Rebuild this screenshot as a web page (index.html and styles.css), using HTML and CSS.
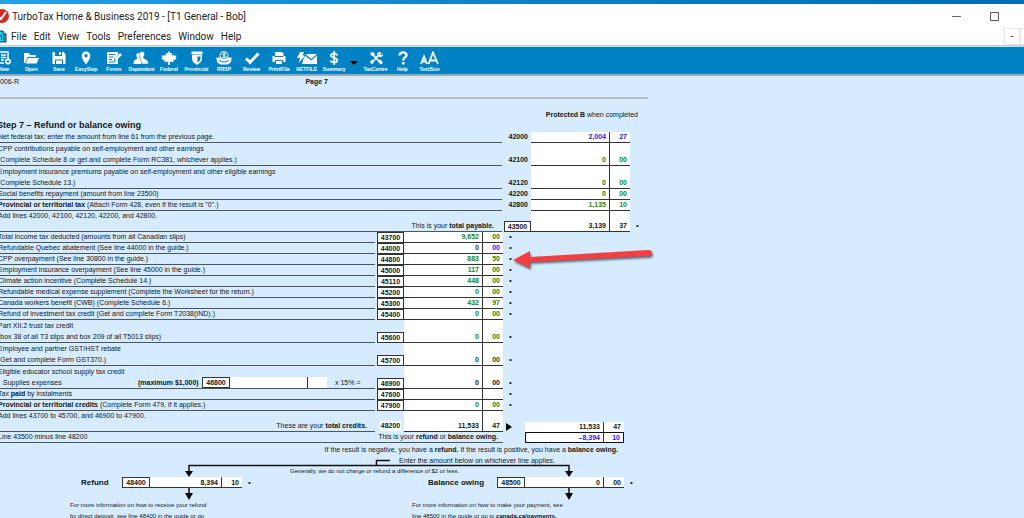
FILE: index.html
```html
<!DOCTYPE html>
<html lang="en">
<head>
<meta charset="utf-8">
<title>TurboTax Home &amp; Business 2019</title>
<link rel="stylesheet" href="styles.css">
</head>
<body>
<div class="app">
  <div class="desktop-strip"></div>
  <header class="titlebar">
    <svg class="logo" viewBox="0 0 14 14" aria-hidden="true"><circle cx="7" cy="7" r="7" fill="#d52b1e"/><path d="M3 7l3 3 5-7" fill="none" stroke="#fff" stroke-width="2"/></svg>
    <h1 class="window-title">TurboTax Home &amp; Business 2019 - [T1 General - Bob]</h1>
    <div class="window-controls">
      <button class="win-btn" aria-label="Minimize"><svg viewBox="0 0 10 10"><path d="M1 5.500h9" stroke="#666" fill="none"/></svg></button>
      <button class="win-btn" aria-label="Maximize"><svg viewBox="0 0 10 10"><path d="M1.500 1.500h8v8h-8z" stroke="#555" fill="none"/></svg></button>
    </div>
  </header>
  <nav class="menubar">
    <svg class="doc-icon" viewBox="0 0 12 13" aria-hidden="true"><path d="M1 1h7l3 3v8H1z" fill="#19d5ee" stroke="#12363c"/><path d="M8 1v3h3" fill="#fff" stroke="#12363c"/><path d="M5 5.500h2M6.500 5v5M9 5v5M8 10h2" stroke="#0b3aa0" fill="none"/></svg>
    <button>File</button><button>Edit</button><button>View</button><button>Tools</button><button>Preferences</button><button>Window</button><button>Help</button>
    <div class="mdi"><button aria-label="Minimize form">-</button><button aria-label="Restore form"></button></div>
  </nav>
  <div class="toolbar">
    <div class="tools">
      <button><svg viewBox="0 0 16 14"><path d="M3 1h9v8M3 1v11h5M5 4h5M5 6.500h5M5 9h3" fill="none" stroke="#fff" stroke-width="1.500"/><circle cx="12" cy="10.500" r="3" fill="#fff"/><path d="M10.500 10.500h3M12 9v3" stroke="#0080c3"/></svg><span>New</span></button>
      <button><svg viewBox="0 0 16 14"><path d="M1 12V2h5l1 2h6v2H4.500L2 12zM2.500 12.500L5 7h11l-2.500 5.500z" fill="#fff"/></svg><span>Open</span></button>
      <button><svg viewBox="0 0 16 14"><path d="M1.500 1h11l2 2v10h-13z" fill="#fff"/><path d="M4 1h7v4H4zM4 8.500h8V13H4z" fill="#0080c3"/><path d="M8 1h2v3H8zM5 9.500h6V13H5z" fill="#fff"/></svg><span>Save</span></button>
      <button><svg viewBox="0 0 16 14"><path d="M8 0.500a4.300 4.300 0 0 0-4.300 4.300C3.700 8 8 13.500 8 13.500s4.300-5.500 4.300-8.700A4.300 4.300 0 0 0 8 .5z" fill="#fff"/><circle cx="8" cy="4.800" r="1.700" fill="#0080c3"/></svg><span>EasyStep</span></button>
      <button><svg viewBox="0 0 16 14"><path d="M1 1h11v3L8 8v2l2-.3 2-2V13H1z" fill="#fff"/><path d="M3 3.500h6M3 6h4.500M3 8.500h3M3 11h6" stroke="#0080c3" fill="none"/><path d="M8.500 9.500l.8-2.500L14 2l2 1.700-4.800 5z" fill="#fff"/></svg><span>Forms</span></button>
      <button><svg viewBox="0 0 16 14"><path d="M5.500 2c1.600 0 2.300 1 2.100 2.500-.1 1-.4 1.500-.8 2v1C8.500 8.300 9 9 9 13H.5c0-3.500 2-4.500 3.700-5.500v-1c-.5-.5-.8-1-.9-2C3.200 3 4 2 5.500 2z" fill="#fff"/><path d="M9 .5c2 0 2.800 1.200 2.600 3-.1 1.200-.5 2-1 2.500v1.200c2 1 4.900 1.500 4.900 5.800H8.500C8.500 9.500 7.500 8.500 7 7.500V6C6.500 5.500 6.300 4.500 6.300 3.500 6.200 1.500 7 .5 9 .5z" fill="#fff" stroke="#0080c3" stroke-width=".6"/></svg><span>Dependant</span></button>
      <button><svg viewBox="0 0 16 14"><path d="M8 0l1.700 2.600 1.400-.7-.4 3 1.900-1.500.5 1.400 2.500-.2-.9 2.100 1.100.8L12 10l.4 1.200-3.700-.4.2 3.200H7.100l.2-3.200-3.700.4L4 10 .2 7.500l1.100-.8-.9-2.100 2.500.2.500-1.400 1.900 1.500-.4-3 1.400.7z" fill="#fff"/></svg><span>Federal</span></button>
      <button><svg viewBox="0 0 16 14"><path d="M2.500 0.500h11v3h-11zM3 4h10v3.500c0 3.500-3 5-5 6.500-2-1.500-5-3-5-6.500z" fill="#fff"/><path d="M8.500 5.500h3v2c0 2-1.500 3.200-3 4z" fill="#0080c3"/></svg><span>Provincial</span></button>
      <button><svg viewBox="0 0 16 14"><path d="M0.500 6.500h15v1.500c0 3-2 5-4 5.500h-7c-2-.5-4-2.500-4-5.500z" fill="#fff"/><circle cx="8" cy="4.500" r="4" fill="#0080c3" stroke="#fff"/><path d="M10 3c-1-1-3.500-.8-3.500.4C6.500 5 10 4 10 5.800 10 7 7 7 6 6M8 1.500v6" stroke="#fff" fill="none"/><path d="M3 9.500c3 2 7 2 10 0" stroke="#0080c3" fill="none"/></svg><span>RRSP</span></button>
      <button><svg viewBox="0 0 16 14"><path d="M2 7.500l4 3.800L14.500 2.500" stroke="#fff" stroke-width="3" fill="none"/></svg><span>Review</span></button>
      <button><svg viewBox="0 0 16 14"><path d="M4 1h7l1.500 1.500V5H4z" fill="#fff"/><path d="M1.500 5h13v6H12V9H4v2H1.500z" fill="#fff"/><path d="M3.500 5.500h9" stroke="#0080c3"/><path d="M5 10h6v3H5z" fill="#fff"/></svg><span>Print/File</span></button>
      <button><svg class="wide" viewBox="0 0 20 14"><path d="M3 1h4L5.500 4.500H8L2 12l1-5H0z" fill="#fff"/><path d="M8.500 3H20l-5.800 5zM7 6.500L8.500 5l5.700 4.500L20 4.500V13H5z" fill="#fff"/></svg><span>NETFILE</span></button>
      <button><svg viewBox="0 0 16 14"><path d="M11.500 4.300C10.500 2.200 5 2 5 4.600 5 7.500 11.300 6 11.300 9.300c0 2.900-5.800 2.700-7 .4M8.200 0v14" stroke="#fff" stroke-width="1.800" fill="none"/></svg><span>Summary</span></button>
    </div>
    <button class="more" aria-label="More summaries"><svg viewBox="0 0 8 4"><path d="M0 0h8L4 4z" fill="#000"/></svg></button>
    <div class="tools tools-right">
      <button><svg viewBox="0 0 16 14"><path d="M3 1.500l10 11M13 1.500L3.500 12" stroke="#fff" stroke-width="1.800" fill="none"/><path d="M2 3l3.500-2L7 4 4 5zM11.500.5L11 3.500l3 .8 1-2v2.500l-2.500 1.500-3-1-.2-3zM9.500 10l3-1.500 2.500 3-2 2zM2 11l2-2.500 2 2L4 13.500z" fill="#fff"/></svg><span>TaxCentre</span></button>
      <button><svg viewBox="0 0 16 14"><path d="M4.500 4.500C4.300.5 11.500.3 11.500 4c0 2.600-3.300 2.300-3.300 5.500" stroke="#fff" stroke-width="2.400" fill="none"/><path d="M7 11h2.600v2.500H7z" fill="#fff"/></svg><span>Help</span></button>
      <button><svg class="wide" viewBox="0 0 20 14"><path d="M1 13l3-7.500L7 13M2 10.500h4M8.500 13l4.500-11.500L18 13M10 9.500h6.500" stroke="#fff" stroke-width="1.800" fill="none"/></svg><span>TextSize</span></button>
    </div>
  </div>

  <main class="document">
    <div class="sheet">
      <div class="sheet-head"><span>5006-R</span><b>Page 7</b></div>
      <p class="protected"><b>Protected B</b> when completed</p>
      <h2>Step 7 – Refund or balance owing</h2>

      <table class="form payable">
        <colgroup><col class="c-desc-wide"><col class="c-code"><col class="c-amt"><col class="c-cents"><col class="c-dot"></colgroup>
        <tbody>
        <tr><td class="desc">Net federal tax: enter the amount from line 61 from the previous page.</td><th>42000</th><td class="amt blue">2,004</td><td class="cents blue">27</td><td></td></tr>
        <tr class="double"><td class="desc">CPP contributions payable on self-employment and other earnings<br>(Complete Schedule 8 or get and complete Form RC381, whichever applies.)</td><th>42100</th><td class="amt green">0</td><td class="cents green">00</td><td></td></tr>
        <tr class="double"><td class="desc">Employment insurance premiums payable on self-employment and other eligible earnings<br>(Complete Schedule 13.)</td><th>42120</th><td class="amt green">0</td><td class="cents green">00</td><td></td></tr>
        <tr><td class="desc">Social benefits repayment (amount from line 23500)</td><th>42200</th><td class="amt green">0</td><td class="cents green">00</td><td></td></tr>
        <tr><td class="desc"><b>Provincial or territorial tax</b> (Attach Form 428, even if the result is "0".)</td><th>42800</th><td class="amt green">1,135</td><td class="cents green">10</td><td></td></tr>
        <tr><td class="desc">Add lines 42000, 42100, 42120, 42200, and 42800.<div class="right">This is your <b>total payable.</b></div></td><th><span class="box">43500</span></th><td class="amt">3,139</td><td class="cents">37</td><td class="dot">•</td></tr>
        </tbody>
      </table>

      <table class="form credits">
        <colgroup><col class="c-desc"><col class="c-code"><col class="c-amt"><col class="c-cents"><col class="c-gap"><col class="c-amt"><col class="c-cents"></colgroup>
        <tbody>
        <tr><td class="desc">Total income tax deducted (amounts from all Canadian slips)</td><th><span class="box">43700</span></th><td class="amt green">9,652</td><td class="cents green">00</td><td class="dot">•</td><td></td><td></td></tr>
        <tr><td class="desc">Refundable Quebec abatement (See line 44000 in the guide.)</td><th><span class="box">44000</span></th><td class="amt blue">0</td><td class="cents blue">00</td><td class="dot">•</td><td></td><td></td></tr>
        <tr><td class="desc">CPP overpayment (See line 30800 in the guide.)</td><th><span class="box">44800</span></th><td class="amt green">883</td><td class="cents green">50</td><td class="dot">•</td><td></td><td></td></tr>
        <tr><td class="desc">Employment insurance overpayment (See line 45000 in the guide.)</td><th><span class="box">45000</span></th><td class="amt green">117</td><td class="cents green">00</td><td class="dot">•</td><td></td><td></td></tr>
        <tr><td class="desc">Climate action incentive (Complete Schedule 14.)</td><th><span class="box">45110</span></th><td class="amt green">448</td><td class="cents green">00</td><td class="dot">•</td><td></td><td></td></tr>
        <tr><td class="desc">Refundable medical expense supplement (Complete the Worksheet for the return.)</td><th><span class="box">45200</span></th><td class="amt green">0</td><td class="cents green">00</td><td class="dot">•</td><td></td><td></td></tr>
        <tr><td class="desc">Canada workers benefit (CWB) (Complete Schedule 6.)</td><th><span class="box">45300</span></th><td class="amt green">432</td><td class="cents green">97</td><td class="dot">•</td><td></td><td></td></tr>
        <tr><td class="desc">Refund of investment tax credit (Get and complete Form T2038(IND).)</td><th><span class="box">45400</span></th><td class="amt green">0</td><td class="cents green">00</td><td class="dot">•</td><td></td><td></td></tr>
        <tr class="double"><td class="desc">Part XII.2 trust tax credit<br>(box 38 of all T3 slips and box 209 of all T5013 slips)</td><th><span class="box">45600</span></th><td class="amt green">0</td><td class="cents green">00</td><td class="dot">•</td><td></td><td></td></tr>
        <tr class="double"><td class="desc">Employee and partner GST/HST rebate<br>(Get and complete Form GST370.)</td><th><span class="box">45700</span></th><td class="amt dark-green">0</td><td class="cents dark-green">00</td><td class="dot">•</td><td></td><td></td></tr>
        <tr class="double"><td class="desc">Eligible educator school supply tax credit
          <div class="supplies"><label for="supplies">Supplies expenses</label><b class="maximum">(maximum $1,000)</b><span class="box">46800</span><input id="supplies" class="dollars"><input class="cents-input" aria-label="Supplies expenses, cents"><span class="rate">x 15% =</span></div></td><th><span class="box">46900</span></th><td class="amt">0</td><td class="cents">00</td><td class="dot">•</td><td></td><td></td></tr>
        <tr><td class="desc">Tax <b>paid</b> by instalments</td><th><span class="box">47600</span></th><td class="amt"><input aria-label="47600 dollars"></td><td class="cents"><input aria-label="47600 cents"></td><td class="dot">•</td><td></td><td></td></tr>
        <tr><td class="desc"><b>Provincial or territorial credits</b> (Complete Form 479, if it applies.)</td><th><span class="box">47900</span></th><td class="amt green">0</td><td class="cents green">00</td><td class="dot">•</td><td></td><td></td></tr>
        <tr><td class="desc">Add lines 43700 to 45700, and 46900 to 47900.<div class="right">These are your <b>total credits.</b></div></td><th><span class="plain">48200</span></th><td class="amt">11,533</td><td class="cents">47</td><td class="carry"><svg viewBox="0 0 6 8" aria-hidden="true"><path d="M0 0l6 4-6 4z"/></svg></td><td class="sub"><span class="sub-amt">11,533</span></td><td class="sub"><span>47</span></td></tr>
        <tr class="result"><td class="desc" colspan="4"><div class="split"><span>Line 43500 minus line 48200</span><span>This is your <b>refund</b> or <b>balance owing.</b></span></div></td><td></td><td class="amt blue">–8,394</td><td class="cents blue">10</td></tr>
        </tbody>
      </table>

      <section class="outcome">
        <svg class="connectors" viewBox="0 0 648 64" aria-hidden="true">
          <path d="M394 17.500H380.500V22M193 32V22.500h380V32M193 45v8M573 45v8" fill="none" stroke="#111" stroke-width="1.500"/>
          <path d="M189 28h8l-4 6zM569 28h8l-4 6zM189 50h8l-4 7zM569 50h8l-4 7z"/>
        </svg>
        <p class="explain">If the result is negative, you have a <b>refund.</b> If the result is positive, you have a <b>balance owing.</b></p>
        <p class="apply">Enter the amount below on whichever line applies.</p>
        <p class="note">Generally, we do not charge or refund a difference of $2 or less.</p>
        <div class="results">
          <div class="line"><b class="line-name">Refund</b><span class="box">48400</span><b class="dollars">8,394</b><b class="line-cents">10</b><span class="line-dot">•</span></div>
          <div class="line owing"><b class="line-name">Balance owing</b><span class="box">48500</span><b class="dollars">0</b><b class="line-cents">00</b><span class="line-dot">•</span></div>
        </div>
        <div class="infos">
          <p>For more information on how to receive your refund<br>by direct deposit, see line 48400 in the guide or go</p>
          <p>For more information on how to make your payment, see<br>line 48500 in the guide or go to <b>canada.ca/payments.</b></p>
        </div>
      </section>
      <svg class="pointer" viewBox="0 0 146 24" aria-hidden="true"><path d="M1 14L18 5v6L136 4q4 0 4 3t-4 3L18 16v6z" fill="#f43f42"/></svg>
    </div>
  </main>
</div>
</body>
</html>
```

FILE: styles.css
```css
* { box-sizing: border-box; }
body { margin: 0; overflow: hidden; font-family: "Liberation Sans", Arial, sans-serif; color: #101820; }
button { border: 0; padding: 0; background: none; color: inherit; font: inherit; }
p, h1, h2 { margin: 0; }
svg { display: block; }

.app { display: flex; flex-direction: column; height: 100vh; overflow: hidden; background: #d7ebff; }
.desktop-strip { flex: none; height: 4px; background: linear-gradient(90deg, #27a0e6, #0f80c8 50%, #006bb5); }
.titlebar { flex: none; display: flex; align-items: center; height: 24px; background: #fff; }
.logo { width: 14px; height: 14px; margin-left: -5px; margin-right: 3px; }
.window-title { flex: 1; font: 10px Roboto, sans-serif; color: #222; }
.window-controls { display: flex; gap: 28px; padding-right: 25px; }
.win-btn svg { width: 10px; height: 10px; }
.menubar { flex: none; display: flex; align-items: center; gap: 7px; height: 18px; background: #fff; font: 10px Roboto, sans-serif; color: #222; border-bottom: 1px solid #ccc; }
.doc-icon { width: 12px; height: 13px; margin-left: -5px; margin-right: -3px; }
.mdi { display: flex; align-self: stretch; margin-left: auto; }
.mdi button { width: 16px; border: 1px solid #e6e6e6; }
.mdi button:last-child { width: 4px; border-right: 0; }

.toolbar { flex: none; display: flex; height: 30px; padding-top: 4px; background: #0082c4; border-top: 1px solid #d6dde2; border-bottom: 2px solid #9fa9b3; color: #fff; }
.tools { display: grid; grid-template-columns: repeat(13, 1fr); width: 358px; margin-left: -10px; }
.tools-right { grid-template-columns: repeat(3, 1fr); width: 81px; margin-left: 4px; }
.tools button { display: flex; flex-direction: column; align-items: center; gap: 1px; font: bold 5px "Liberation Sans", sans-serif; line-height: 7px; white-space: nowrap; }
.tools svg { width: 16px; height: 14px; }
.tools svg.wide { width: 20px; }
.tools button span { display: block; }
.more { width: 8px; margin-left: 2px; }
.more svg { width: 8px; height: 4px; }

.document { flex: 1; min-height: 0; overflow: hidden; }
.sheet { position: relative; width: 652px; margin-left: -4px; font-size: 7px; line-height: 11px; }
.sheet-head { display: flex; justify-content: space-between; height: 23px; padding-right: 320px; border-bottom: 2px solid #b9bec4; }
.protected { padding: 10px 10px 0 0; text-align: right; }
h2 { padding: 0 0 2px 1px; font-size: 9px; line-height: 10px; }

.form { table-layout: fixed; border-spacing: 0; }
.form td, .form th { padding: 0; vertical-align: bottom; line-height: 10px; white-space: nowrap; }
.form .desc { padding-left: 2px; border-bottom: 1px solid #4c5660; }
.form .double .desc { line-height: 11px; }
.c-desc-wide { width: 506px; }
.c-desc { width: 379px; }
.c-code { width: 29px; }
.c-amt { width: 79px; }
.c-cents { width: 20px; }
.c-dot { width: 18px; }
.c-gap { width: 22px; }
.payable { width: 652px; }
.credits { width: 628px; }
.right { padding-right: 8px; text-align: right; }
.form th { padding-right: 3px; border-bottom: 1px solid transparent; text-align: right; }
.form th:has(.box) { padding: 0 0 0 2px; border: 0; }
.form th:has(.plain) { padding: 0 0 0 2px; }
.box { display: block; width: 28px; height: 11px; background: #fff; border: 1px solid #333; text-align: center; font-weight: bold; line-height: 9px; }
th .box { width: auto; }
.plain { display: block; background: #fff; text-align: center; margin-right: 3px; margin-left: 3px; }
.form .amt, .form .cents { background: #fff; border-bottom: 1px solid #333; text-align: right; font-weight: bold; }
.form .amt { padding-right: 3px; border-right: 1px solid #333; }
.form .cents { padding-right: 3px; }
.form td.blue { color: #1f16ff; }
.form td.green { color: #128a12; }
.form td.dark-green { color: #145014; }
.form .dot { padding-left: 6px; border-bottom: 1px solid transparent; font-size: 8px; }
input { display: block; width: 100%; height: 10px; padding: 0; border: 0; background: #fff; font: bold 7px "Liberation Sans", sans-serif; text-align: right; }
.supplies { display: flex; height: 11px; padding-left: 5px; }
.supplies label { width: 135px; }
.maximum { width: 64px; }
.supplies .dollars { width: 78px; border-right: 1px solid #333; }
.supplies .cents-input { width: 19px; }
.supplies input { height: 11px; }
.rate { padding-left: 8px; }
.carry svg { width: 6px; height: 8px; margin: 0 0 1px 3px; }
.form .sub { font-weight: bold; text-align: right; }
.sub span { display: block; padding-right: 3px; background: #fff; }
.sub .sub-amt { border-right: 1px solid #333; }
.split { display: flex; justify-content: space-between; padding-right: 5px; }
.form .result .amt, .form .result .cents { border-top: 1px solid #111; border-bottom: 1px solid #111; line-height: 9px; }
.form .result .amt { border-left: 1px solid #111; }
.form .result .cents { border-right: 1px solid #111; }

.outcome { position: relative; padding-top: 1px; }
.connectors { position: absolute; left: 0; top: 0; width: 648px; height: 64px; }
.explain { padding-right: 30px; text-align: right; }
.apply { padding-left: 403px; }
.note { padding-left: 294px; font-size: 6px; }
.results { display: grid; grid-template-columns: 375px 1fr; }
.line { display: flex; height: 11px; }
.line-name { width: 126px; padding-left: 85px; font-size: 8px; white-space: nowrap; }
.owing .line-name { padding-left: 57px; }
.line .dollars { width: 72px; padding-right: 3px; background: #fff; border-right: 1px solid #333; border-bottom: 1px solid #333; text-align: right; }
.owing .dollars { width: 79px; }
.line-cents { width: 20px; padding-right: 3px; background: #fff; border-bottom: 1px solid #333; text-align: right; }
.line-dot { padding-left: 6px; font-size: 8px; }
.infos { display: grid; grid-template-columns: 342px 1fr; padding: 12px 0 0 74px; font-size: 6px; }
.pointer { position: absolute; left: 516px; top: 170px; width: 146px; height: 24px; filter: drop-shadow(1px 2px 1px #5a6b7c); }
```
